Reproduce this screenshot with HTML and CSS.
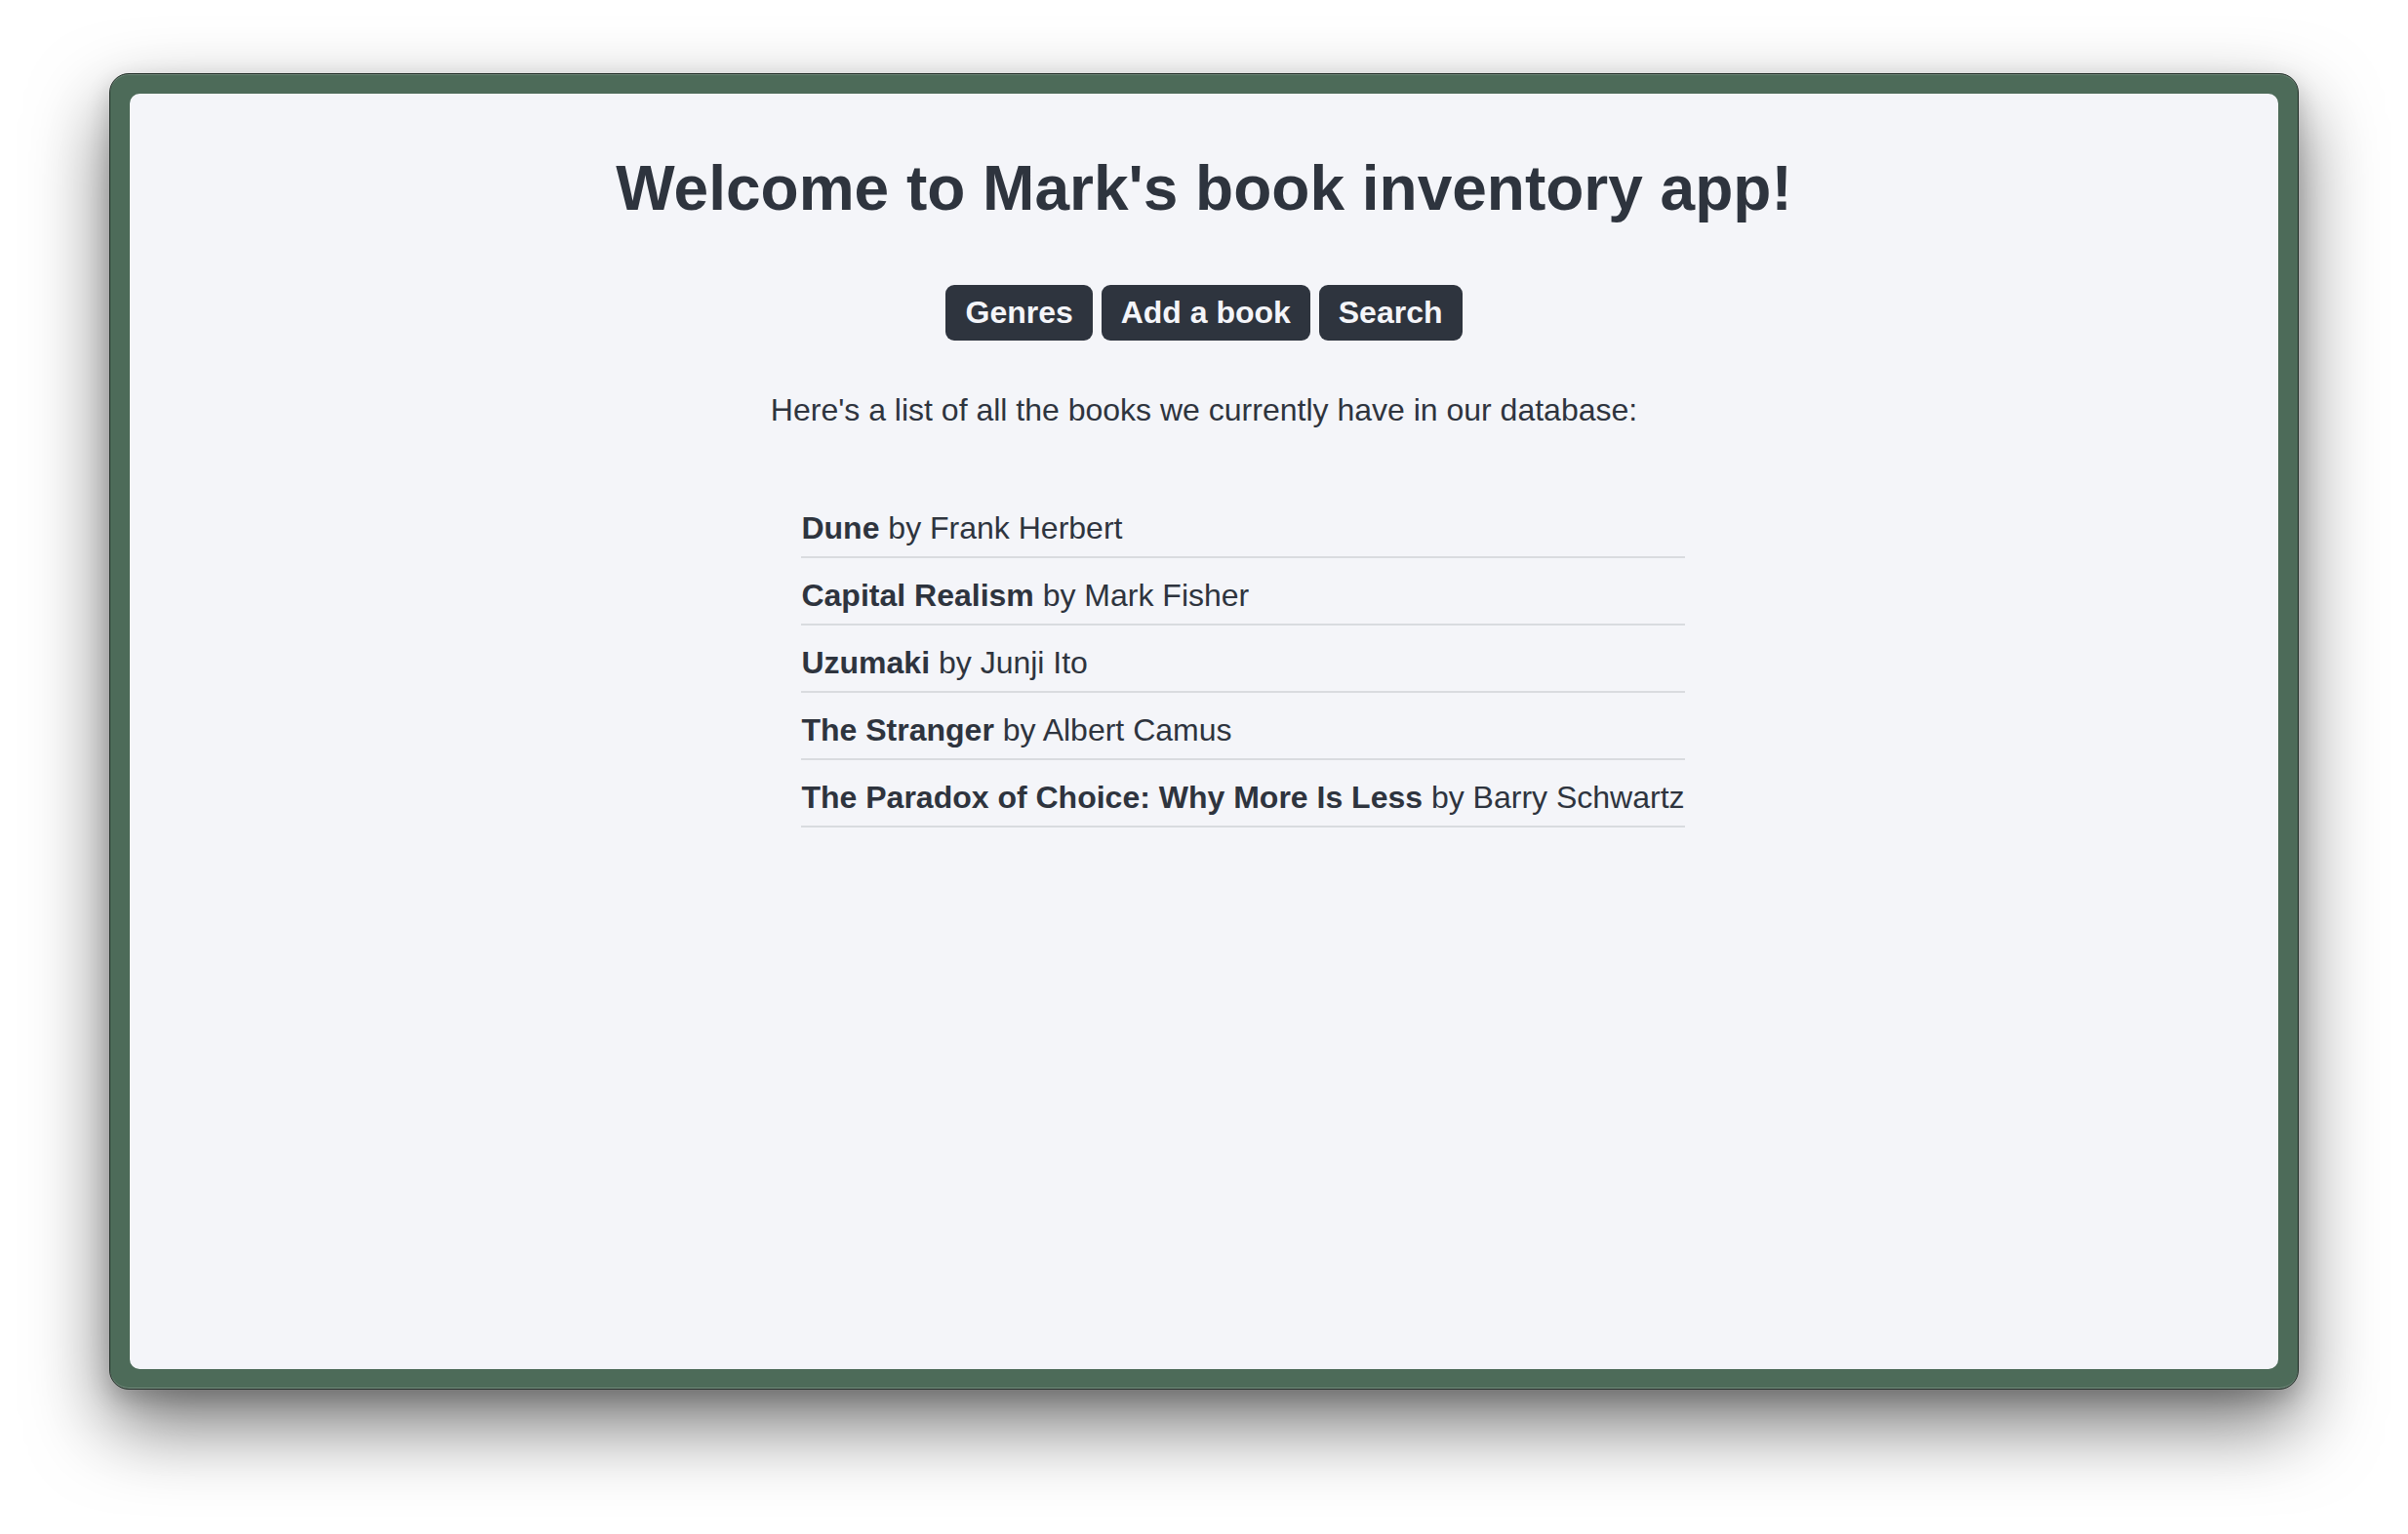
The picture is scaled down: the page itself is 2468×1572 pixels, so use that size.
FILE: index.html
```html
<!DOCTYPE html>
<html lang="en">
<head>
<meta charset="utf-8">
<title>Mark's book inventory</title>
<link rel="stylesheet" href="styles.css">
</head>
<body>
<div class="window">
  <main class="app">
    <h1 class="title">Welcome to Mark's book inventory app!</h1>
    <nav class="nav"><a class="btn" href="#">Genres</a> <a class="btn" href="#">Add a book</a> <a class="btn" href="#">Search</a></nav>
    <p class="intro">Here's a list of all the books we currently have in our database:</p>
    <ul class="books">
      <li class="book"><strong>Dune</strong> by Frank Herbert</li>
      <li class="book"><strong>Capital Realism</strong> by Mark Fisher</li>
      <li class="book"><strong>Uzumaki</strong> by Junji Ito</li>
      <li class="book"><strong>The Stranger</strong> by Albert Camus</li>
      <li class="book"><strong>The Paradox of Choice: Why More Is Less</strong> by Barry Schwartz</li>
    </ul>
  </main>
</div>
</body>
</html>
```

FILE: styles.css
```css
html, body {
  margin: 0;
  padding: 0;
  background: #ffffff;
}

body {
  font-family: "Liberation Sans", Arial, Helvetica, sans-serif;
  color: #2e343e;
  padding: 75px 0 0 112px;
  height: 1572px;
  box-sizing: border-box;
  overflow: hidden;
}

.window {
  width: 2244px;
  height: 1349px;
  box-sizing: border-box;
  padding: 20px;
  background: #4d6b59;
  border: 1px solid #1e2b24;
  border-radius: 20px;
  box-shadow:
    inset 0 1px 0 rgba(255, 255, 255, 0.18),
    inset 0 -1px 0 rgba(255, 255, 255, 0.25),
    0 36px 80px rgba(0, 0, 0, 0.55),
    0 10px 24px rgba(0, 0, 0, 0.18);
}

.app {
  height: 100%;
  box-sizing: border-box;
  background: #f4f5f9;
  border-radius: 10px;
  padding-top: 60px;
  display: flex;
  flex-direction: column;
  align-items: center;
}

.title {
  margin: 0;
  font-size: 64px;
  font-weight: 700;
  line-height: normal;
  color: #2e343e;
}

.nav {
  margin-top: 62px;
  font-size: 32px;
  line-height: normal;
  white-space: nowrap;
}

.btn {
  display: inline-block;
  padding: 10px 20px;
  background: #2e343e;
  color: #f4f5f9;
  font-weight: 700;
  text-decoration: none;
  border-radius: 9px;
}

.intro {
  margin: 53px 0 0;
  font-size: 32px;
  line-height: normal;
}

.books {
  margin: 64px 0 0;
  padding: 0 0 0 80px;
  list-style: none;
  font-size: 32px;
  line-height: normal;
}

.book {
  padding: 20px 0 10px;
  border-bottom: 2px solid #d9dbdf;
  white-space: nowrap;
}

.book strong {
  font-weight: 700;
}
```
